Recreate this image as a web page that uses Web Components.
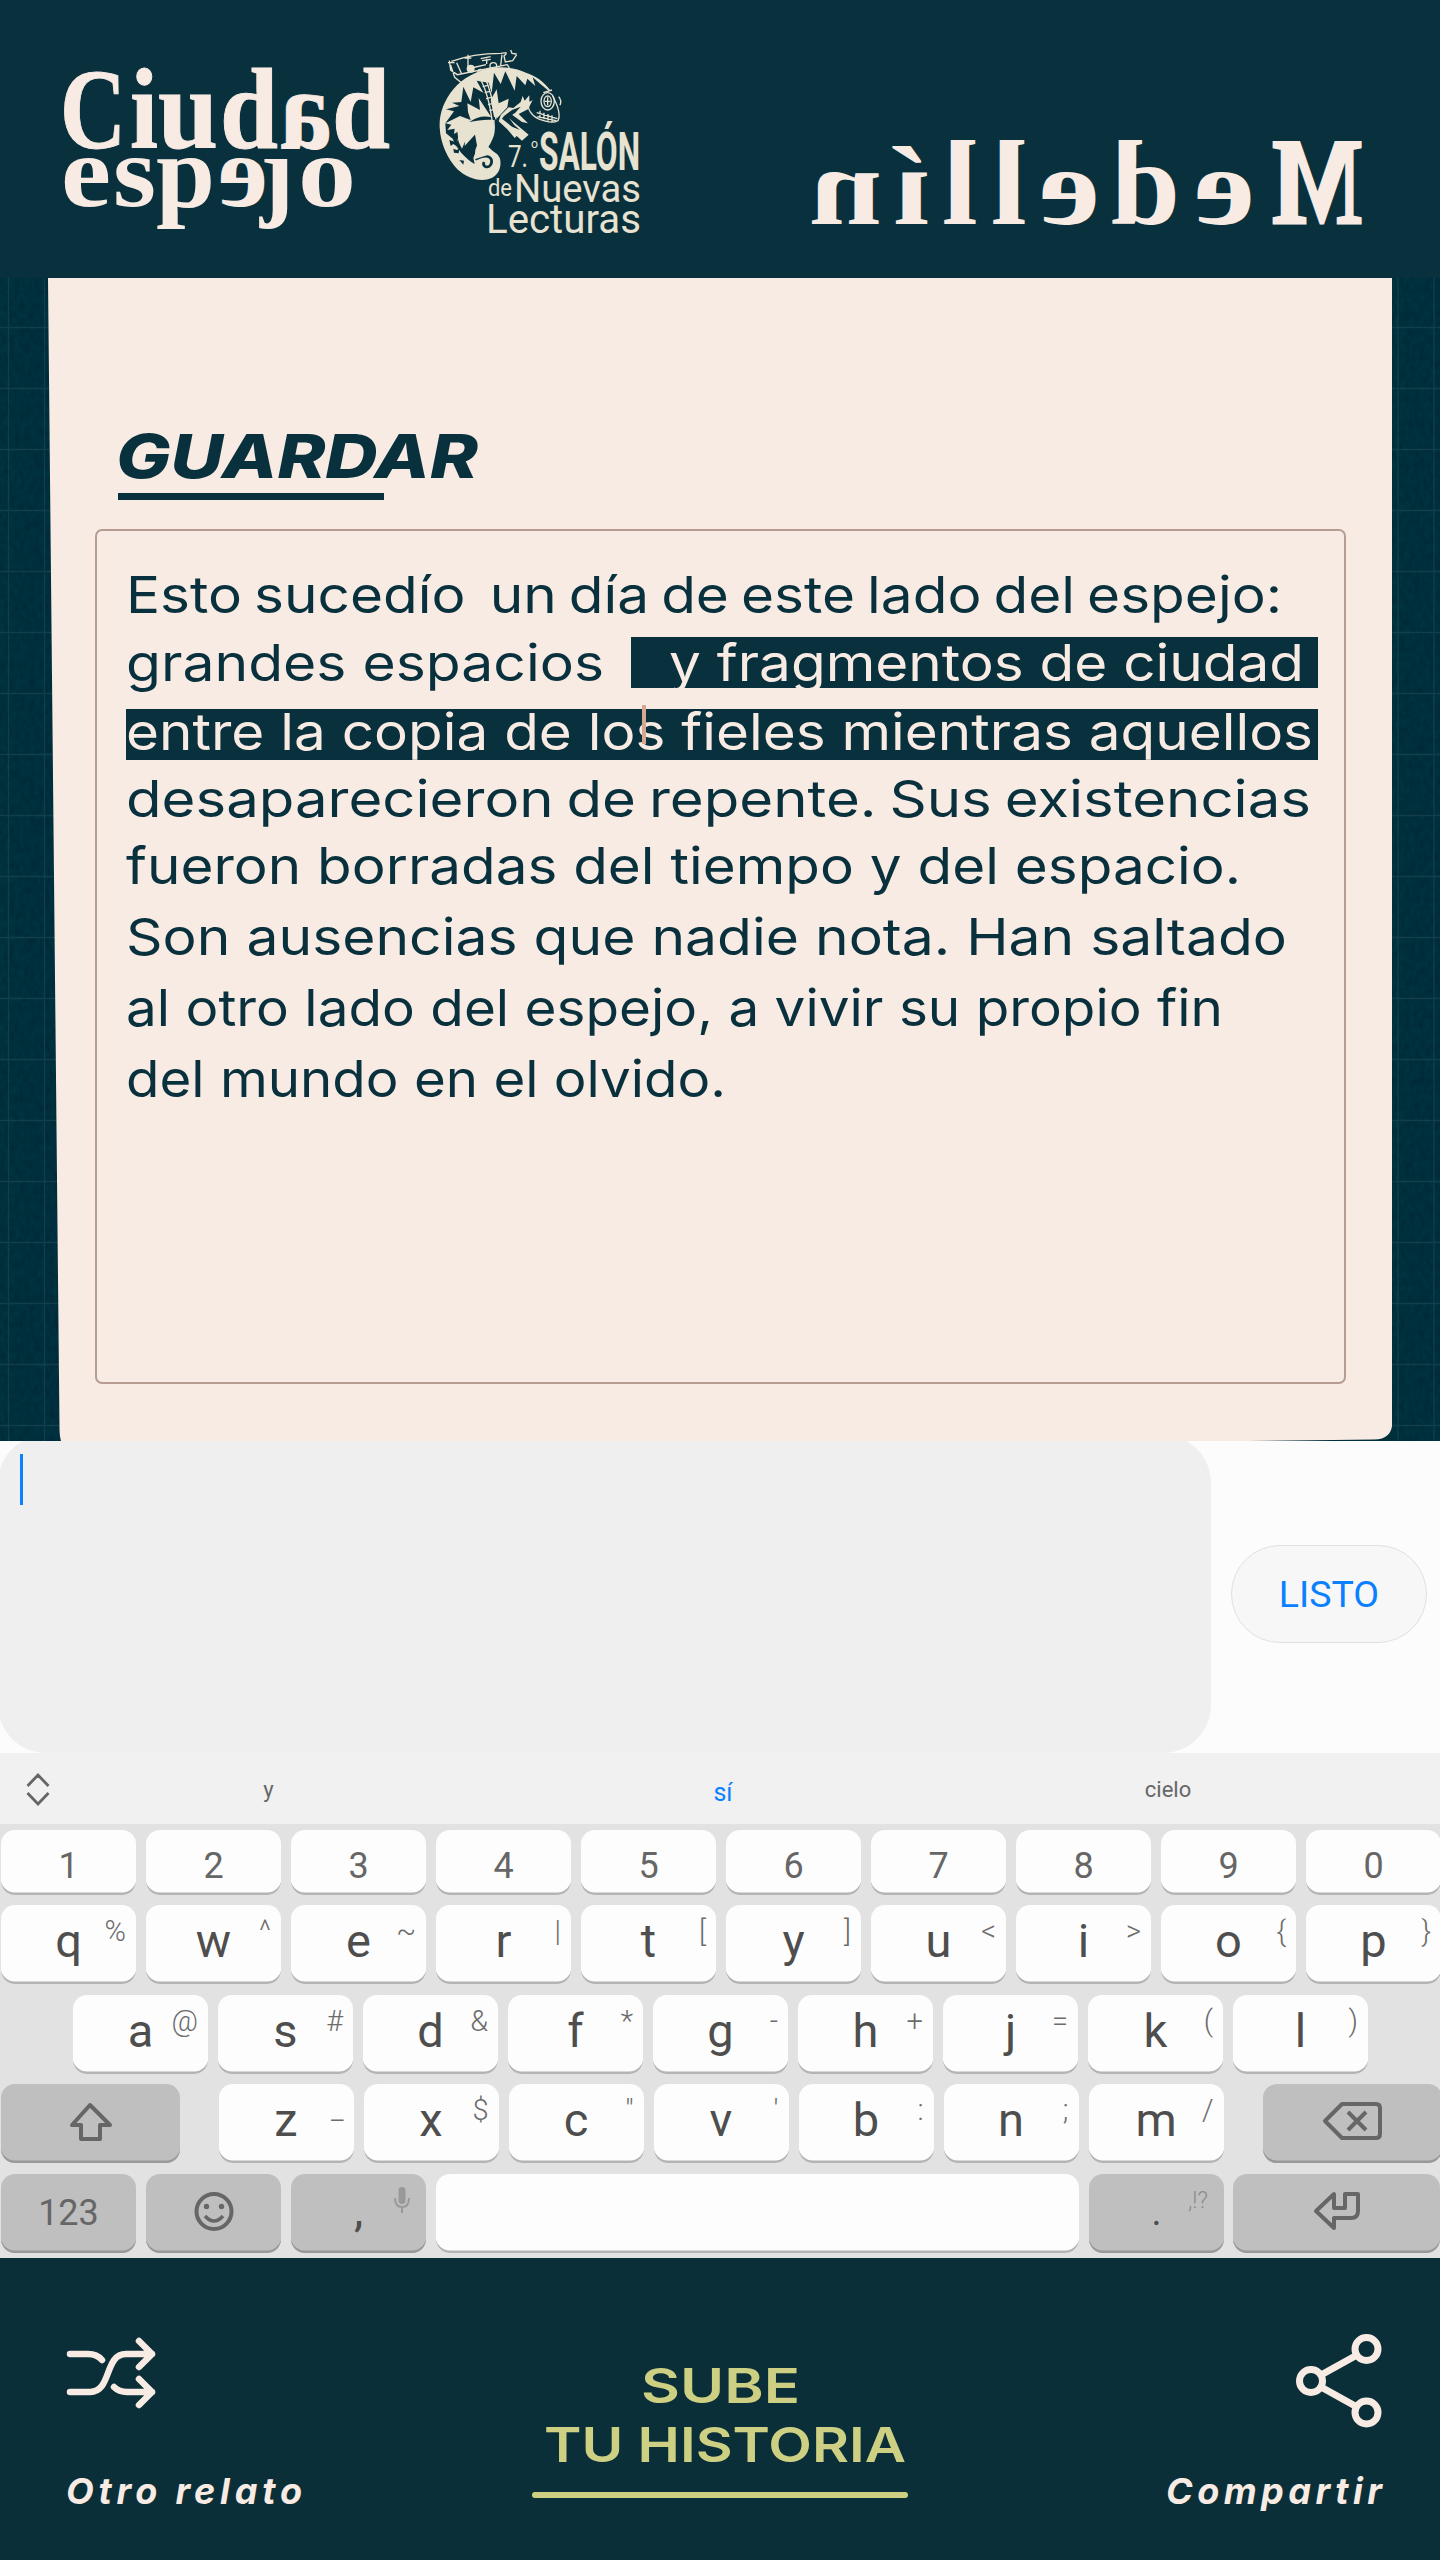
<!DOCTYPE html>
<html lang="es">
<head>
<meta charset="utf-8">
<title>Ciudad espejo</title>
<style>
html,body{margin:0;padding:0}
body{width:1440px;height:2560px;overflow:hidden;background:#092f3c;font-family:Inter,"Liberation Sans",sans-serif}
</style>
</head>
<body>
<mirror-app></mirror-app>
<script>
const define = (name, html, setup) => customElements.define(name, class extends HTMLElement {
  connectedCallback() {
    if (this.shadowRoot) return;
    const root = this.attachShadow({mode: 'open'});
    const t = document.createElement('template');
    t.innerHTML = typeof html === 'function' ? html(this) : html;
    root.append(t.content.cloneNode(true));
    if (setup) setup(this, root);
  }
});

/* One line of type stretched to an exact measure. */
define('fit-line', el => {
  const a = (n, d) => el.getAttribute(n) || d;
  return `<style>:host{display:block;height:${a('h', 60)}px}svg{display:block;overflow:visible}text{white-space:pre;word-spacing:${a('gap', 0)}px}</style>
  <svg width="${a('w')}" height="${a('h', 60)}"><text x="0" y="${a('b', 44)}" fill="currentColor" font-family="${a('face', 'Inter')}, sans-serif" font-size="${a('size', 51)}" font-weight="${a('weight', 400)}" font-style="${a('slant', 'normal')}" textLength="${a('w')}" lengthAdjust="${a('adjust', 'spacingAndGlyphs')}">${el.textContent}</text></svg>`;
});

/* Display lettering: [char, left, right, mirrored] for each glyph. */
const letters = (glyphs, y, size) => glyphs.map(([c, l, r, m]) =>
  `<text transform="translate(${m ? r : l},${y}) scale(${m ? -1 : 1},1)" font-size="${size}" textLength="${r - l}" lengthAdjust="spacingAndGlyphs">${c}</text>`).join('');

define('city-logo', `<style>:host{display:block}svg{display:block;overflow:visible}</style>
<svg width="330" height="180" viewBox="61 62 330 180" fill="#f8ebe3" font-family="Liberation Serif, serif" font-weight="700"><g stroke="#f8ebe3" stroke-width="1">${
  letters([['C', 60, 126], ['i', 130, 158], ['u', 158, 218], ['d', 220, 278], ['a', 280, 332, 1], ['d', 332, 390]], 148, 114)}</g><g>${
  letters([['e', 61, 111], ['s', 113, 156]], 206, 101)}${letters([['p', 156, 215]], 207, 104)}${letters([['e', 218, 268, 1]], 206, 101)}${letters([['ȷ', 260, 294]], 207, 104)}${letters([['o', 298, 356]], 206, 101)}</g></svg>`);

define('salon-logo', `<style>:host{display:block}svg{display:block;overflow:visible}</style>
<svg width="206" height="190" viewBox="436 48 206 190" fill="#e8e2d0" font-family="Roboto, sans-serif">
<g transform="translate(420 40) scale(.33333)">
 <path d="M392 152C372 124 345 106 318 98C288 84 250 78 214 84C170 92 128 114 100 148C72 182 57 222 59 262C61 310 82 356 112 388C142 416 184 428 215 414C238 402 245 378 240 356C234 338 214 328 194 334C208 322 216 302 222 286C226 268 226 250 220 240C196 238 170 242 148 246C168 232 190 226 214 232L176 174L180 210L142 190L144 216L152 240L120 228L76 250L102 214L78 208L118 198L96 188L124 186L130 140L152 186L160 142L190 158L170 122L206 128L215 160L222 98L242 132L256 94L284 152L290 108L316 136L322 116L346 138L338 112L364 134L386 152Z"/>
 <path fill="#09303d" d="M76 250L94 254L82 270L104 266L102 282L118 272L112 304L138 270L148 292L164 278L172 322L160 354L164 372C134 354 110 326 98 296L78 280Z"/>
 <path fill="none" stroke="#09303d" stroke-width="8" d="M166 358C182 350 206 342 214 358C218 372 208 384 196 380Q188 376 192 366"/>
 <path d="M112 274L152 264L126 326L116 306ZM182 286L202 294L200 316L224 338L164 358L166 330ZM138 270L174 252L188 244L200 250L170 278L134 318Z"/>
 <path fill="#09303d" d="M88 300l18 6 6 14-12-8-8 6zM100 326l10 4 8-4-2 14-14-2zM118 360l14 2-2 12z"/>
 <path d="M212 180L230 148L236 190L266 176L262 202L232 234L222 230ZM242 226L266 202L280 204L302 186L308 168L314 182L328 166L328 186L338 180L324 208L296 222L324 250L306 246L270 220L262 230L292 256L326 284L306 302L290 288L284 294L262 268L236 244Z"/>
 <path fill="#09303d" d="M252 228L276 210L302 200L286 218L266 232L282 254L300 270L276 260L246 236Z"/>
 <g fill="none" stroke="#e8e2d0" stroke-width="4">
  <path d="M174 106C196 138 208 182 216 240M192 104C208 142 220 180 228 238M182 122l16-4M188 140l16-4M194 158l16-4M198 176l16-4M204 194l16-4M208 212l16-4"/>
  <path d="M92 76L104 112L126 130M88 62l4 28L112 104L262 74M84 68l20 0M94 64C148 44 206 40 242 40L260 38M144 44v46M134 54h20M110 68l14 32M260 40l-8 8 4 18 22-4 12-18M272 30l4 10 14 2M262 74l6 10M246 44l-4 32M182 56l30-6M186 62l26-4M200 56v16M154 84l44-10"/>
  <circle cx="220" cy="78" r="10"/><circle cx="182" cy="96" r="8"/>
  <ellipse cx="383" cy="184" rx="20" ry="26"/><ellipse cx="383" cy="184" rx="11" ry="16"/><path d="M383 172v24M374 184h18M370 158l26-8M328 184C318 204 334 226 354 236C378 246 400 250 414 242C422 226 416 202 398 168M350 218l62 18M352 230l56 12M360 212v22M372 218v20M384 222v20M396 226v20M416 170q10 12 4 26"/>
  <path d="M222 240C222 262 216 278 202 304M182 248C190 262 184 274 170 286"/>
 </g>
 <circle cx="152" cy="86" r="12"/>
</g>
<text x="508" y="167" font-size="32" font-weight="400" textLength="20" lengthAdjust="spacingAndGlyphs">7.</text>
<text x="531" y="148" font-size="13" textLength="7" lengthAdjust="spacingAndGlyphs">o</text>
<text x="539" y="170" font-size="53.500" font-weight="700" textLength="101" lengthAdjust="spacingAndGlyphs">SALÓN</text>
<text x="488" y="196" font-size="24" font-weight="400" textLength="24" lengthAdjust="spacingAndGlyphs">de</text>
<text x="514" y="201.500" font-size="39.500" textLength="127" lengthAdjust="spacingAndGlyphs">Nuevas</text>
<text x="486" y="233" font-size="41" textLength="155" lengthAdjust="spacingAndGlyphs">Lecturas</text>
</svg>`);

define('mirror-title', `<style>:host{display:block}svg{display:block;overflow:visible}.m{stroke:#f8ebe3;stroke-width:3px}</style>
<svg width="550" height="90" viewBox="0 0 550 90" fill="#f8ebe3" font-family="Liberation Serif, serif" font-weight="700"><g transform="translate(550 0) scale(-1 1)"><g class="m">${
  letters([['M', 0, 91]], 83, 122)}</g>${letters([['e', 107, 168]], 84, 110)}${letters([['d', 182, 251]], 84, 121)}${letters([['e', 262, 323]], 84, 110)}${
  letters([['l', 335, 371], ['l', 384, 420]], 84, 121)}${letters([['í', 432, 468]], 84, 113)}${letters([['n', 480, 552]], 84, 110)}</g></svg>`);

define('top-bar', `<style>:host{display:flex;height:278px;box-sizing:border-box;background:#09303d;padding:48px 78px 0 61px;align-items:flex-start}
city-logo{margin-top:14px}salon-logo{margin-left:45px}mirror-title{margin:92px 0 0 auto}</style>
<city-logo></city-logo><salon-logo></salon-logo><mirror-title></mirror-title>`);

define('story-row', el => `<style>:host{display:flex;height:${el.getAttribute('h')}px;align-items:flex-start}</style><slot></slot>`);
define('mark-band', el => `<style>:host{display:block;box-sizing:border-box;width:${el.getAttribute('w')}px;height:51px;background:#09303d;color:#f8ebe3;padding-left:${el.getAttribute('pad')}px;margin-top:${el.getAttribute('top') || 0}px}</style><slot></slot>`);

define('story-card', `<style>
:host{display:block;position:relative;height:1163px;overflow:hidden;background:#002f3c;color:#09303d}
.tex{position:absolute;inset:0}
.paper{position:relative;box-sizing:border-box;height:1163px;margin:0 48px;background:#f8ebe3;padding:156px 46px 0 47px;clip-path:path('M0 0H1344.500V1144Q1344 1161.500 1326 1161.500L1200 1163H13Q11.500 1158 11.500 1150Z')}
h1{margin:0 0 0 21px;height:59px}
hr{margin:0 0 29px 23px;width:266px;height:7px;border:0;background:#09303d}
.frame{position:relative;box-sizing:border-box;height:855px;border:2px solid #b79d91;border-radius:7px;padding:38px 0 0 29px}
i{position:absolute;left:545px;top:174px;width:4px;height:39px;background:#d5a88f}
</style>
<svg class="tex" width="1440" height="1163"><defs>
<filter id="n" x="0" y="0" width="100%" height="100%" color-interpolation-filters="sRGB"><feTurbulence type="fractalNoise" baseFrequency=".2 .12" numOctaves="3" seed="4"/><feColorMatrix values="0 0 0 0 0  0 0 0 0 .13  0 0 0 0 .19  1 0 0 0 -.3"/></filter>
<linearGradient id="s" x2="1"><stop stop-color="#00343f"/><stop offset=".5" stop-color="#00323e"/><stop offset="1" stop-color="#003140"/></linearGradient></defs>
<rect width="62" height="1163" fill="url(#s)"/><rect x="1392" width="48" height="1163" fill="url(#s)"/>
<rect width="62" height="1163" filter="url(#n)"/><rect x="1392" width="48" height="1163" filter="url(#n)"/>
<path d="${Array.from({length: 19}, (_, i) => `M0 ${49.5 + 61 * i}H1440`).join('')}M8.500 0V1163M44.500 0V1163M1398 0V1163M1434 0V1163" stroke="#1a4650" stroke-width="1.300" fill="none" opacity=".7"/></svg>
<div class="paper">
<h1><fit-line w="362" h="59" b="44" size="60.500" weight="800" slant="italic">GUARDAR</fit-line></h1><hr>
<div class="frame">
<story-row h="68"><fit-line w="1156" b="44" gap="-3.500">Esto sucedío&nbsp; un día de este lado del espejo:</fit-line></story-row>
<story-row h="69"><fit-line w="478" b="44">grandes espacios</fit-line><mark-band w="687" pad="38" style="margin-left:27px"><fit-line w="635" h="51" b="44">y fragmentos de ciudad</fit-line></mark-band></story-row>
<story-row h="67"><mark-band w="1192" pad="0" top="3"><fit-line w="1187" h="51" b="41">entre la copia de los fieles mientras aquellos</fit-line></mark-band></story-row>
<story-row h="67"><fit-line w="1185" gap="-3">desaparecieron de repente. Sus existencias</fit-line></story-row>
<story-row h="71"><fit-line w="1115">fueron borradas del tiempo y del espacio.</fit-line></story-row>
<story-row h="71"><fit-line w="1161">Son ausencias que nadie nota. Han saltado</fit-line></story-row>
<story-row h="71"><fit-line w="1097">al otro lado del espejo, a vivir su propio fin</fit-line></story-row>
<story-row h="71"><fit-line w="600">del mundo en el olvido.</fit-line></story-row>
<i></i></div></div>`);

define('text-entry', `<style>
:host{display:flex;height:312px;background:#fcfcfc;overflow:hidden;font-family:Roboto,sans-serif}
.box{box-sizing:border-box;flex:none;width:1213px;height:318px;margin:-6px 0 0 -2px;border-radius:48px;background:#efefef;padding:19px 0 0 22px}
.box div{width:3px;height:51px;background:#0a80ff}
button{margin:104px 0 0 20px;box-sizing:border-box;width:196px;height:98px;border:1.500px solid #e0e0e0;border-radius:49px;background:#f7f7f7;color:#0a80ff;font:400 37.500px/96px Roboto,sans-serif;padding:0;text-align:center}
</style><div class="box"><div></div></div><button>LISTO</button>`);

define('suggest-bar', `<style>
:host{display:flex;height:71px;background:#f1f1f1;font:22px/71px Roboto,sans-serif;color:#666}
svg{display:block;margin:20px 0 0 26px;width:24px;height:33px}
span{flex:none;text-align:center;height:71px}
</style><svg fill="none" stroke="#666" stroke-width="2.800"><path d="M1.500 13L12 2L22.500 13M1.500 20L12 31L22.500 20"/></svg>
<span style="width:437px;line-height:74px">y</span><span style="width:472px;font-size:25px;line-height:79px;color:#0a80ff">sí</span><span style="width:418px;line-height:73px">cielo</span>`);

define('key-cap', el => {
  const a = n => el.getAttribute(n), num = el.hasAttribute('num');
  return `<style>
:host{display:block;position:relative;flex:none;box-sizing:border-box;width:${a('w') || 135}px;height:${num ? 65 : 79}px;border-radius:14px;background:${el.hasAttribute('dark') ? '#bfbfbf' : '#fdfdfd'};box-shadow:inset 0 -3px 0 -.500px ${el.hasAttribute('dark') ? '#999' : '#b4b4b4'};color:#4e4e4e;font-family:Roboto,sans-serif;text-align:center}
.m{font-size:47px;line-height:72px}.n{font-size:36px;line-height:${num ? 72 : 79}px;color:#666}
.dot{font-size:38px;line-height:77px}
.s{position:absolute;right:10px;top:0;font-size:29px;line-height:52px;font-weight:300;color:#6c6c6c}
.t{font-size:23px;line-height:54px;right:16px;color:#8c8c8c}
::slotted(svg){position:absolute;left:0;top:0;overflow:visible}
</style><div class="${num || a('c') === '123' ? 'n' : 'm'} ${a('c') === '.' ? 'dot' : ''}">${a('c') || ''}</div>${a('s') ? `<div class="s ${a('s').length > 1 ? 't' : ''}"></div>` : ''}<slot></slot>`;
}, (el, root) => { const s = root.querySelector('.s'); if (s) s.textContent = el.getAttribute('s'); });

const esc = s => s.replace(/&/g, '&amp;').replace(/"/g, '&quot;').replace(/</g, '&lt;');
const keys = (chars, subs) => [...chars].map((c, i) => `<key-cap c="${c}" ${subs ? `s="${esc(subs[i])}"` : 'num'}></key-cap>`).join('');
const ico = (body) => `<svg width="10" height="10" fill="none" stroke="#666" stroke-width="4" stroke-linejoin="round">${body}</svg>`;

define('soft-keyboard', `<style>
:host{display:flex;flex-direction:column;gap:10.400px;box-sizing:border-box;height:434px;background:#e2e2e2;padding:6px 0 0 1px;overflow:hidden}
div{display:flex;gap:10px}
</style>
<div>${keys('1234567890')}</div>
<div>${keys('qwertyuiop', '%^~|[]<>{}')}</div>
<div style="padding-left:72px">${keys('asdfghjkl', '@#&*-+=()')}</div>
<div><key-cap dark w="179" style="margin-right:28.500px">${ico('<path d="M89 21L71 41H80V55H99V41H109Z"/>')}</key-cap>${keys('zxcvbnm', `_$"':;/`)}<key-cap dark w="179" style="margin-left:29.500px">${ico('<path d="M79 20H113Q117 20 117 24V50Q117 54 113 54H79L62 37ZM85 28L103 46M103 28L85 46"/>')}</key-cap></div>
<div><key-cap dark c="123"></key-cap><key-cap dark>${ico('<circle cx="68" cy="37.500" r="17.500"/><circle cx="60.500" cy="32.500" r="2.700" fill="#666" stroke="none"/><circle cx="75.500" cy="32.500" r="2.700" fill="#666" stroke="none"/><path d="M59 42Q68 52 77 42" stroke-width="3.500"/>')}</key-cap><key-cap dark c=",">${ico('<g stroke="#999" stroke-width="2"><rect x="108.500" y="14" width="5" height="15" rx="2.500" fill="#999"/><path d="M104 24Q104 33 111 33Q118 33 118 24M111 33V39"/></g>')}</key-cap><key-cap w="643"></key-cap><key-cap dark c="." s=",!?"></key-cap><key-cap dark w="207" style="margin-left:-1px">${ico('<path d="M101 20V34H112V20H125V37Q125 44 118 44H101V54L83 37Z"/>')}</key-cap></div>`);

define('bottom-bar', `<style>
:host{display:flex;box-sizing:border-box;height:302px;background:#0a2f38;color:#f8ebe3;padding:0 58px}
.a,.c{display:flex;flex-direction:column;flex:1 1 0}.a{padding-left:8px}.c{align-items:flex-end;padding-left:8px}
svg{display:block}
.b{flex:none;width:376px;display:flex;flex-direction:column;align-items:center;color:#cdd082;padding-top:100px}
.b div{width:376px;height:6px;border-radius:3px;background:#cdd082;margin-top:16px}
</style>
<div class="a"><svg style="margin:78px 0 51px" width="92" height="76" viewBox="66 2336 92 76" fill="none" stroke="#f8ebe3" stroke-width="6.500" stroke-linecap="round" stroke-linejoin="round"><path d="M70 2354H88Q97 2354 102 2360M70 2392H90C112 2392 104 2354 126 2354H152M139 2341L152 2354L139 2367M114 2387Q119 2392 127 2392H152M139 2379L152 2392L139 2405"/></svg>
<fit-line w="236" h="50" b="41" size="36" weight="650" slant="italic" adjust="spacing">Otro relato</fit-line></div>
<div class="b"><fit-line w="159" h="59" b="45" size="48" weight="600">SUBE</fit-line><fit-line w="362" h="59" b="45" size="48" weight="600" style="margin-left:9px">TU HISTORIA</fit-line><div></div></div>
<div class="c"><svg style="margin:76px 0 33px" width="86" height="96" viewBox="1296 2334 86 96" fill="none" stroke="#f8ebe3" stroke-width="7"><circle cx="1311" cy="2381" r="11.500"/><circle cx="1366.500" cy="2349" r="11.500"/><circle cx="1366.500" cy="2412.500" r="11.500"/><path d="M1321 2375L1357 2355M1321 2387L1357 2407"/></svg>
<fit-line w="216" h="50" b="41" size="36" weight="650" slant="italic" adjust="spacing">Compartir</fit-line></div>`);

define('mirror-app', `<style>:host{display:flex;flex-direction:column;width:1440px;height:2560px}</style>
<top-bar></top-bar><story-card></story-card><text-entry></text-entry><suggest-bar></suggest-bar><soft-keyboard></soft-keyboard><bottom-bar></bottom-bar>`);
</script>
</body>
</html>
